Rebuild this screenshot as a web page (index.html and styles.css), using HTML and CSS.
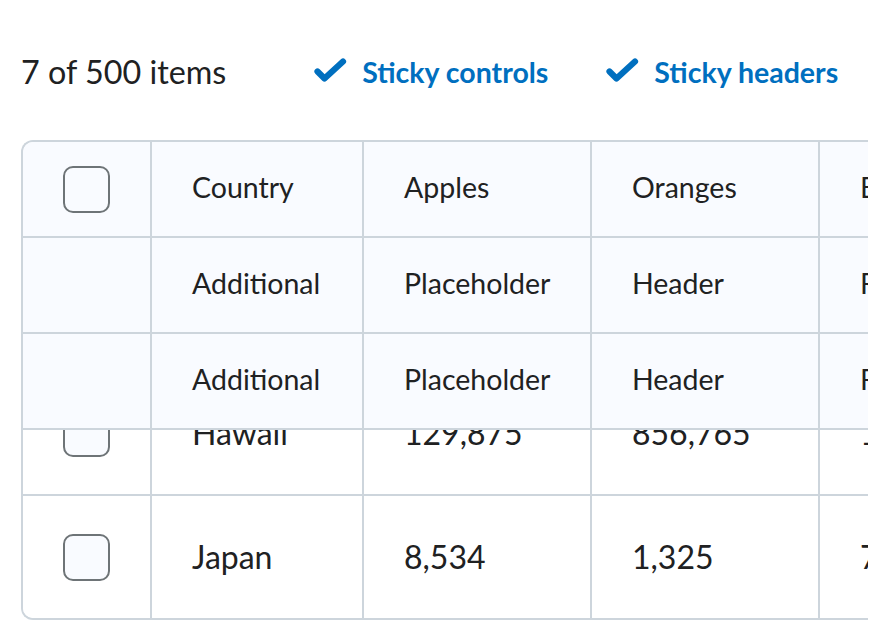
FILE: index.html
```html
<!DOCTYPE html>
<html lang="en">
<head>
<meta charset="utf-8">
<title>Sticky table</title>
<link rel="stylesheet" href="styles.css">
</head>
<body>
<div class="page">
  <div class="controls">
    <span class="count">7 of 500 items</span>
    <button class="toggle" type="button">
      <svg class="check" width="33" height="26" viewBox="0 0 33 26" aria-hidden="true"><path d="M3.5 13.5 L10.5 20.5 L29 3.5" fill="none" stroke="currentColor" stroke-width="6.2" stroke-linecap="round" stroke-linejoin="round"/></svg>
      <span class="label">Sticky controls</span>
    </button>
    <button class="toggle" type="button">
      <svg class="check" width="33" height="26" viewBox="0 0 33 26" aria-hidden="true"><path d="M3.5 13.5 L10.5 20.5 L29 3.5" fill="none" stroke="currentColor" stroke-width="6.2" stroke-linecap="round" stroke-linejoin="round"/></svg>
      <span class="label">Sticky headers</span>
    </button>
  </div>

  <div class="table">
    <div class="head">
      <div class="row">
        <div class="cell sel"><span class="checkbox"></span></div>
        <div class="cell">Country</div>
        <div class="cell">Apples</div>
        <div class="cell">Oranges</div>
        <div class="cell">Bananas</div>
      </div>
      <div class="row">
        <div class="cell sel"></div>
        <div class="cell">Additional</div>
        <div class="cell">Placeholder</div>
        <div class="cell">Header</div>
        <div class="cell">Row</div>
      </div>
      <div class="row">
        <div class="cell sel"></div>
        <div class="cell">Additional</div>
        <div class="cell">Placeholder</div>
        <div class="cell">Header</div>
        <div class="cell">Row</div>
      </div>
    </div>
    <div class="body">
      <div class="body-scroll">
        <div class="row">
          <div class="cell sel"><span class="checkbox"></span></div>
          <div class="cell">Hawaii</div>
          <div class="cell">129,875</div>
          <div class="cell">856,765</div>
          <div class="cell">123,888</div>
        </div>
        <div class="row">
          <div class="cell sel"><span class="checkbox"></span></div>
          <div class="cell">Japan</div>
          <div class="cell">8,534</div>
          <div class="cell">1,325</div>
          <div class="cell">78,530</div>
        </div>
      </div>
    </div>
  </div>
</div>
</body>
</html>
```

FILE: styles.css
```css
* { box-sizing: border-box; }

html, body {
  margin: 0;
  padding: 0;
  background: #ffffff;
}

body {
  font-family: Lato, "Noto Sans", sans-serif;
  font-size: 32px;
  color: #202122;
}

.page {
  padding: 0 20px 0 21px;
}

.controls {
  display: flex;
  align-items: center;
  height: 48px;
  margin: 47px 0 45px;
}

.count {
  font-size: 32.3px;
  margin-right: 88px;
  white-space: nowrap;
}

.toggle {
  display: flex;
  align-items: center;
  gap: 15px;
  padding: 0;
  margin: 0 58px 0 0;
  border: 0;
  background: none;
  font: inherit;
  font-size: 28.5px;
  font-weight: 700;
  color: #006fbf;
  white-space: nowrap;
  cursor: pointer;
}

.label {
  padding-top: 1px;
}

.check {
  display: block;
  flex: none;
}

.table {
  border: 2px solid #cdd5dc;
  border-right: 0;
  border-radius: 12px 0 0 12px;
  overflow: hidden;
}

.row {
  display: grid;
  grid-template-columns: 129px 212px 228px 228px 228px;
  width: max-content;
}

.cell {
  display: flex;
  align-items: center;
  padding: 0 0 4px 40px;
  border-right: 2px solid #cdd5dc;
  border-bottom: 2px solid #cdd5dc;
  white-space: nowrap;
}

.head .cell {
  height: 96px;
  padding-bottom: 4px;
  font-size: 28.5px;
  background: #f9fbff;
}

.body {
  height: 188px;
  overflow: hidden;
}

.body-scroll {
  margin-top: -58px;
}

.body .cell {
  height: 124px;
  padding-bottom: 2px;
  background: #ffffff;
}

.body .row:last-child .cell {
  border-bottom: 0;
  height: 122px;
}

.cell.sel {
  justify-content: center;
  padding: 0;
}

.checkbox {
  display: block;
  width: 47px;
  height: 47px;
  border: 2px solid #6e7477;
  border-radius: 10px;
  background: #f9fbff;
}
```
